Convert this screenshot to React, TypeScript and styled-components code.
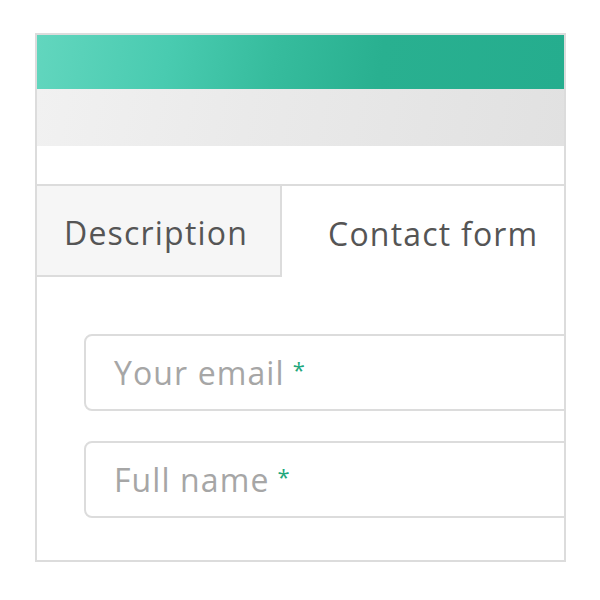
import styled, { createGlobalStyle } from "styled-components";

const GlobalStyle = createGlobalStyle`
  html, body {
    margin: 0;
    padding: 0;
    background: #ffffff;
  }
  body {
    font-family: "Open Sans", "Noto Sans", sans-serif;
  }
`;

const Frame = styled.div`
  margin: 33px 0 0 35px;
  width: 531px;
  height: 529px;
  box-sizing: border-box;
  border: 2px solid #dcdcdc;
  overflow: hidden;
  display: flex;
  flex-direction: column;
  background: #fff;
`;

const TopBar = styled.div`
  height: 54px;
  flex-shrink: 0;
  background: linear-gradient(100deg, #62d6be 0%, #49cbb0 25%, #36bc9d 45%, #29b090 65%, #25ad8e 100%);
`;

const SubBar = styled.div`
  height: 57px;
  flex-shrink: 0;
  background: linear-gradient(100deg, #f1f1f1 0%, #eaeaea 40%, #e1e1e1 100%);
`;

const Spacer = styled.div`
  height: 38px;
  flex-shrink: 0;
`;

const Tabs = styled.div`
  display: flex;
  border-top: 2px solid #dcdcdc;
  flex-shrink: 0;
`;

const Tab = styled.div<{ $active?: boolean }>`
  box-sizing: border-box;
  height: 91px;
  display: flex;
  align-items: center;
  padding: 3px ${(p) => (p.$active ? "0" : "32px")} 0 ${(p) => (p.$active ? "46px" : "27px")};
  font-size: 32px;
  letter-spacing: 1.2px;
  color: #555;
  background: ${(p) => (p.$active ? "#fff" : "#f6f6f6")};
  border-right: ${(p) => (p.$active ? "none" : "2px solid #dcdcdc")};
  border-bottom: ${(p) => (p.$active ? "none" : "2px solid #dcdcdc")};
  white-space: nowrap;
`;

const Form = styled.div`
  display: flex;
  flex-direction: column;
  gap: 30px;
  padding: 57px 0 0 47px;
`;

const Field = styled.label`
  box-sizing: border-box;
  width: 560px;
  height: 77px;
  border: 2px solid #dcdcdc;
  border-radius: 8px;
  display: flex;
  align-items: center;
  padding-left: 28px;
  white-space: nowrap;
`;

const Placeholder = styled.span`
  font-size: 32px;
  letter-spacing: 1.1px;
  color: #a6a6a6;
`;

const Required = styled.span`
  font-size: 22px;
  color: #22a77c;
  margin-left: 8px;
  align-self: flex-start;
  margin-top: 18px;
`;

export default function App() {
  return (
    <>
      <GlobalStyle />
      <Frame>
        <TopBar />
        <SubBar />
        <Spacer />
        <Tabs>
          <Tab>Description</Tab>
          <Tab $active>Contact form</Tab>
        </Tabs>
        <Form>
          <Field>
            <Placeholder>Your email</Placeholder>
            <Required>*</Required>
          </Field>
          <Field>
            <Placeholder>Full name</Placeholder>
            <Required>*</Required>
          </Field>
        </Form>
      </Frame>
    </>
  );
}
